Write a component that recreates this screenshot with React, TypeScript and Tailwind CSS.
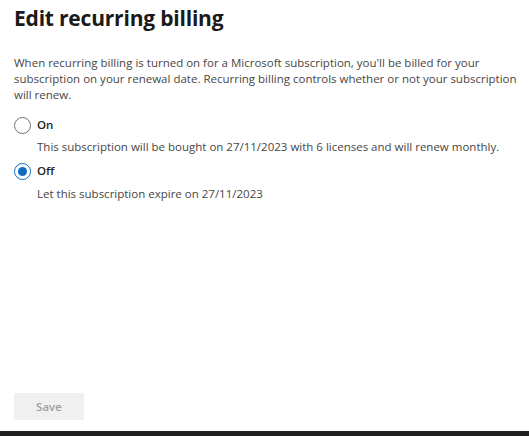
import React from "react";

export default function App() {
  return (
    <div className="w-[529px] h-[436px] bg-white flex flex-col text-[#323130]" style={{ fontFamily: '"Open Sans", "Noto Sans", sans-serif' }}>
      <div className="flex-1 flex flex-col pl-[14px] pr-[4px]">
        <h1 className="text-[21px] leading-[30px] font-bold text-[#1b1a19] mt-[3px] tracking-[-0.2px]">Edit recurring billing</h1>
        <p className="mt-[22px] text-[11.5px] leading-[16px] text-[#484644]">
          When recurring billing is turned on for a Microsoft subscription, you'll be billed for your subscription on your renewal date. Recurring billing controls whether or not your subscription will renew.
        </p>
        <div className="mt-[12px] flex flex-col">
          <div className="flex items-center gap-[6px] h-[20px]">
            <span className="w-[17px] h-[17px] rounded-full border border-[#707070] bg-white" />
            <span className="text-[11.5px] font-semibold text-[#252423]">On</span>
          </div>
          <div className="pl-[23px] mt-[2px] text-[11.5px] leading-[20px] text-[#484644]">
            This subscription will be bought on 27/11/2023 with 6 licenses and will renew monthly.
          </div>
          <div className="flex items-center gap-[6px] h-[20px] mt-[4px]">
            <span className="w-[17px] h-[17px] rounded-full border border-[#0f6cbd] bg-white flex items-center justify-center">
              <span className="w-[9px] h-[9px] rounded-full bg-[#0f6cbd]" />
            </span>
            <span className="text-[11.5px] font-semibold text-[#252423]">Off</span>
          </div>
          <div className="pl-[23px] mt-[3px] text-[11.5px] leading-[20px] text-[#484644]">
            Let this subscription expire on 27/11/2023
          </div>
        </div>
        <div className="mt-auto mb-[11px]">
          <button className="w-[70px] h-[27px] bg-[#f0f0f0] text-[#a19f9d] text-[11.5px] font-semibold rounded-[2px]">Save</button>
        </div>
      </div>
      <div className="h-[5px] bg-[#202020]" />
    </div>
  );
}
